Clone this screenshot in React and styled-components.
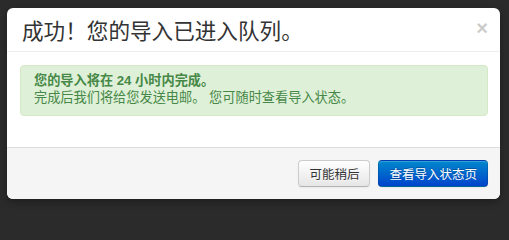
import React from "react";
import styled, { createGlobalStyle } from "styled-components";

const Global = createGlobalStyle`
  html, body { margin: 0; padding: 0; background: #2b2b2b; }
  body { font-family: "Liberation Sans", "Noto Sans CJK SC", sans-serif; }
`;

const Backdrop = styled.div`
  height: 210px;
  box-sizing: border-box;
  padding: 8px 9px 11px 7px;
  background: #2b2b2b;
`;

const Modal = styled.div`
  background: #fff;
  border-radius: 6px;
  overflow: hidden;
  display: flex;
  flex-direction: column;
  box-shadow: 0 3px 7px rgba(0, 0, 0, 0.3);
`;

const Header = styled.div`
  display: flex;
  align-items: center;
  justify-content: space-between;
  height: 43px;
  padding: 0 12px 0 15px;
  border-bottom: 1px solid #eee;
`;

const Title = styled.h3`
  margin: 0;
  font-family: "Noto Sans CJK SC", sans-serif;
  font-weight: 400;
  font-size: 21.6px;
  line-height: 26px;
  color: #333;
`;

const Close = styled.button`
  border: 0;
  background: none;
  padding: 0;
  font-family: "Liberation Sans", sans-serif;
  font-weight: 700;
  font-size: 20px;
  line-height: 20px;
  color: #000;
  opacity: 0.2;
  cursor: pointer;
  margin-top: -4px;
`;

const Body = styled.div`
  padding: 13px 12px 31px 13px;
`;

const Alert = styled.div`
  background: #dff0d8;
  border: 1px solid #d6e9c6;
  border-radius: 4px;
  color: #468847;
  padding: 6px 14px 9px 13px;
  font-family: "Liberation Sans", "Noto Sans CJK SC", sans-serif;
  font-size: 13.2px;
  line-height: 17px;
`;

const Line = styled.div`
  font-weight: ${(p) => (p.$bold ? 700 : 400)};
`;

const Footer = styled.div`
  display: flex;
  justify-content: flex-end;
  gap: 8px;
  padding: 12px 12px 12px;
  background: #f5f5f5;
  border-top: 1px solid #ddd;
`;

const Button = styled.button`
  height: 27px;
  padding: 0 10px;
  border-radius: 4px;
  font-family: "Noto Sans CJK SC", sans-serif;
  font-size: 12.5px;
  line-height: 25px;
  cursor: pointer;
  border: 1px solid ${(p) => (p.$primary ? "rgba(0,0,0,0.12)" : "#ccc")};
  border-bottom-color: ${(p) => (p.$primary ? "rgba(0,0,0,0.25)" : "#b3b3b3")};
  color: ${(p) => (p.$primary ? "#fff" : "#333")};
  background: ${(p) =>
    p.$primary
      ? "linear-gradient(to bottom, #0088cc, #0044cc)"
      : "linear-gradient(to bottom, #ffffff, #e6e6e6)"};
  text-shadow: ${(p) =>
    p.$primary ? "0 -1px 0 rgba(0,0,0,0.25)" : "0 1px 1px rgba(255,255,255,0.75)"};
  box-shadow: inset 0 1px 0 rgba(255, 255, 255, 0.2), 0 1px 2px rgba(0, 0, 0, 0.05);
`;

export default function App() {
  return (
    <>
      <Global />
      <Backdrop>
        <Modal>
          <Header>
            <Title>成功！您的导入已进入队列。</Title>
            <Close aria-label="关闭">×</Close>
          </Header>
          <Body>
            <Alert>
              <Line $bold>您的导入将在 24 小时内完成。</Line>
              <Line>完成后我们将给您发送电邮。 您可随时查看导入状态。</Line>
            </Alert>
          </Body>
          <Footer>
            <Button>可能稍后</Button>
            <Button $primary>查看导入状态页</Button>
          </Footer>
        </Modal>
      </Backdrop>
    </>
  );
}
